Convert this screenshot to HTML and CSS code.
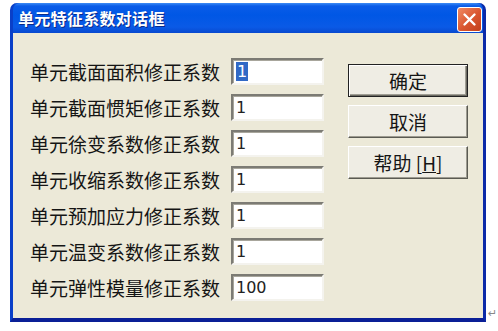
FILE: index.html
```html
<!DOCTYPE html>
<html lang="zh-CN">
<head>
<meta charset="UTF-8"/>
<title>单元特征系数对话框</title>
<link rel="stylesheet" href="styles.css">
</head>
<body>
<div class="page">
 <div class="window">
  <div class="titlebar">
   <span class="title">单元特征系数对话框</span>
   <button class="close" aria-label="关闭">
    <svg width="15" height="15" viewBox="0 0 15 15"><path d="M2.5 2.5L12.5 12.5M12.5 2.5L2.5 12.5" stroke="#fff" stroke-width="2.4" stroke-linecap="round"/></svg>
   </button>
  </div>
  <div class="content">
   <div class="fields">
    <div class="row"><label>单元截面面积修正系数</label><div class="input"><span class="sel">1</span></div></div>
    <div class="row"><label>单元截面惯矩修正系数</label><div class="input">1</div></div>
    <div class="row"><label>单元徐变系数修正系数</label><div class="input">1</div></div>
    <div class="row"><label>单元收缩系数修正系数</label><div class="input">1</div></div>
    <div class="row"><label>单元预加应力修正系数</label><div class="input">1</div></div>
    <div class="row"><label>单元温变系数修正系数</label><div class="input">1</div></div>
    <div class="row"><label>单元弹性模量修正系数</label><div class="input">100</div></div>
   </div>
   <div class="buttons">
    <button class="btn default">确定</button>
    <button class="btn">取消</button>
    <button class="btn">帮助 [<u>H</u>]</button>
   </div>
  </div>
 </div>
 <span class="mark">↵</span>
</div>
</body>
</html>
```

FILE: styles.css
```css
body{margin:0;background:#fff;font-family:"Noto Sans CJK SC","DejaVu Sans",sans-serif;}
.page{display:flex;align-items:flex-end;padding:3px 0 0 10px;}
.window{width:476px;height:319px;box-sizing:border-box;display:flex;flex-direction:column;background:#0a4fd8;border-radius:7px 7px 0 0;border:solid #0a3fc8;border-width:0 3px 4px 3px;border-bottom-color:#0a1f96;border-right-color:#0b2aa8;}
.titlebar{height:30px;display:flex;align-items:center;justify-content:space-between;padding:0 1px 0 5px;border-radius:7px 7px 0 0;background:linear-gradient(#3d8cf5 0,#0a5ce8 3px,#0057e5 12px,#0a5ae6 24px,#0849cf 30px);}
.title{color:#fff;font-weight:bold;font-size:16px;letter-spacing:0.3px;text-shadow:1px 1px 0 #0a2a8a;}
.close{width:25px;height:25px;margin-top:3px;padding:0;display:flex;align-items:center;justify-content:center;border:1px solid #fff;border-radius:3px;background:linear-gradient(135deg,#f08a63 0,#d9552f 55%,#c2401c 100%);}
.content{flex:1;display:flex;background:#ece9d8;padding:25px 0 0 17px;}
.fields{display:flex;flex-direction:column;gap:9px;}
.row{display:flex;align-items:center;height:27px;}
label{width:201px;font-size:19px;line-height:27px;color:#151515;}
.input{width:93px;height:27px;box-sizing:border-box;background:#fff;border:2px solid;border-color:#7c7b74 #f4f3ee #f4f3ee #7c7b74;box-shadow:inset 1px 1px 0 #a8a69c;padding:2px 0 0 3px;font-family:"DejaVu Sans",sans-serif;font-size:16px;line-height:20px;color:#222;}
.sel{background:#3169c6;color:#fff;padding:0 1px;}
.buttons{display:flex;flex-direction:column;gap:8px;margin:6px 0 0 24px;}
.btn{width:120px;height:33px;padding:0;background:#efede4;font-family:"Noto Sans CJK SC",sans-serif;font-size:19px;color:#151515;border:1px solid;border-color:#fff #5a5a52 #5a5a52 #fff;box-shadow:inset -1px -1px 0 #9d9b90;}
.btn.default{border:1px solid #222;box-shadow:inset 1px 1px 0 #fff,inset -1px -1px 0 #6a6960,inset -2px -2px 0 #a09e94;}
.btn u{text-decoration-thickness:1px;}
.mark{color:#888;font-size:11px;line-height:11px;margin:0 0 3px 2px;font-family:"DejaVu Sans",sans-serif;}
```
